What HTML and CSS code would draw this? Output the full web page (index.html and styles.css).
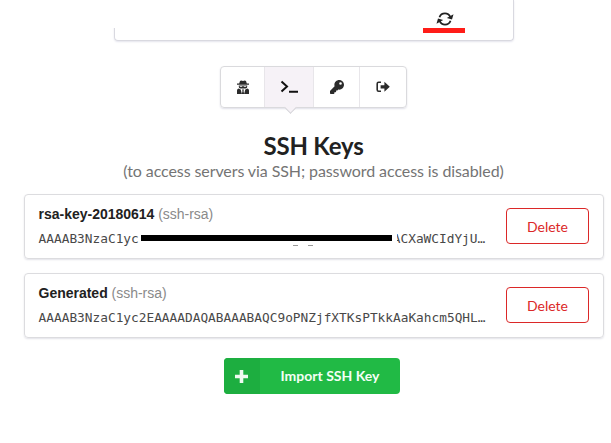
FILE: index.html
```html
<!DOCTYPE html>
<html lang="en">
<head>
<meta charset="utf-8">
<title>SSH Keys</title>
<link rel="stylesheet" href="styles.css">
</head>
<body>
<section class="panel">
  <div class="sync">
    <svg width="18" height="14" viewBox="0 0 18 14" fill="none" stroke="#222" stroke-width="1.800"><path d="M3.500 5.200C4.500 2.300 6.500 1.400 9 1.400c2.600 0 4.300 1.300 5.300 3.500"/><path d="M14.500 8.800C13.500 11.700 11.500 12.600 9 12.600c-2.600 0-4.300-1.300-5.300-3.500"/><path fill="#222" stroke="none" d="M17.500 2.200 16 7.500 10.800 6zM.5 11.800 2 6.500 7.200 8z"/></svg>
  </div>
</section>
<nav class="menu">
  <a class="item agent"><svg width="14" height="15" viewBox="0 0 14 15" fill="#2b2b2b"><path d="M4 1q1-1 3 0 2-1 3 0l.8 2.600H13v1.200H1V3.600h2.200zM2.800 5.400h8.400v1.400q0 1.800-1.600 1.800H4.400Q2.800 8.600 2.800 6.800zM2.500 8.500 4.700 9.500 5.900 14H1V10.500Q1 9 2.500 8.500zM11.500 8.500 9.300 9.500 8.100 14H13V10.500Q13 9 11.500 8.500zM6 9.500h2L7.500 11l.7 3H5.800l.7-3z"/><path fill="#fff" d="M3.800 6h2.500v.8H3.800zM7.700 6h2.500v.8H7.700z"/></svg></a>
  <a class="item terminal active"><svg width="20" height="14" viewBox="0 0 20 14" fill="none" stroke="#111" stroke-width="2"><path d="M2.500 1.500 8 6.500 2.500 11.500M10 11.800h9"/></svg></a>
  <a class="item key"><svg width="14" height="14" viewBox="0 0 512 512" fill="#2b2b2b"><path d="M512 176c0 97.200-78.800 176-176 176-11.200 0-22.200-1.100-32.800-3.100l-24 27A24 24 0 0 1 261.200 384H224v40c0 13.300-10.700 24-24 24h-40v40c0 13.300-10.700 24-24 24H24c-13.300 0-24-10.700-24-24v-78.100c0-6.400 2.500-12.500 7-17l161.800-161.800A176 176 0 0 1 160 176C160 78.800 238.800 0 336 0s176 78.500 176 176zM336 128a48 48 0 1 0 96 0 48 48 0 1 0-96 0z"/></svg></a>
  <a class="item exit"><svg width="14" height="14" viewBox="0 0 14 14"><path fill="none" stroke="#2b2b2b" stroke-width="1.600" d="M5 2.300H2.600Q1.200 2.300 1.200 3.700v6.100q0 1.400 1.400 1.400H5"/><path fill="#2b2b2b" d="M4.600 5.200H8.400V1.800L13.800 6.800 8.400 11.800V8.400H4.600z"/></svg></a>
</nav>
<header class="heading">
  <h2>SSH Keys</h2>
  <p>(to access servers via SSH; password access is disabled)</p>
</header>
<main class="keys">
  <article class="card">
    <div class="info">
      <div class="name"><b>rsa-key-20180614</b> (ssh-rsa)</div>
      <div class="value masked"><span>AAAAB3NzaC1yc</span><span class="mask"><i class="bar"></i><i class="specks"></i></span><span class="tail">ACXaWCIdYjU…</span></div>
    </div>
    <button class="delete">Delete</button>
  </article>
  <article class="card">
    <div class="info">
      <div class="name"><b>Generated</b> (ssh-rsa)</div>
      <div class="value">AAAAB3NzaC1yc2EAAAADAQABAAABAQC9oPNZjfXTKsPTkkAaKahcm5QHL…</div>
    </div>
    <button class="delete">Delete</button>
  </article>
</main>
<button class="import">
  <span class="plus"><svg width="13" height="13" viewBox="0 0 13 13" fill="#effaf1"><path d="M4.700 0h3.600v4.700H13v3.600H8.300V13H4.700V8.300H0V4.700h4.700z"/></svg></span>
  <span class="label">Import SSH Key</span>
</button>
</body>
</html>
```
FILE: styles.css
```css
* { box-sizing: border-box; }
body {
  margin: 0;
  height: 443px;
  overflow: hidden;
  background: #fff;
  color: #212121;
  font-family: Lato, sans-serif;
  font-size: 14px;
}
svg { display: block; }
.panel {
  position: relative;
  width: 400px;
  height: 41px;
  margin: 0 0 0 114px;
  border: 1px solid #d9d9e0;
  border-top: 0;
  border-radius: 0 0 4px 4px;
  box-shadow: 0 1px 2px #e4e4ed;
}
.panel::before {
  content: "";
  position: absolute;
  left: -4px;
  top: 0;
  width: 12px;
  height: 28px;
  background: #fff;
}
.sync {
  width: 42px;
  height: 33px;
  margin-left: 308px;
  padding: 12px 0 0 13px;
  border-bottom: 5px solid #ff1d18;
}
.menu {
  display: flex;
  width: 187px;
  height: 42px;
  margin: 25px 0 0 220px;
  border: 1px solid #dadadd;
  border-radius: 4px;
  box-shadow: 0 1px 2px #dfdfe8;
}
.item {
  display: flex;
  align-items: center;
  justify-content: center;
  border-right: 1px solid #e8e6ea;
}
.agent { width: 44px; }
.terminal { width: 49px; }
.key { width: 46px; }
.exit { width: 46px; border-right: 0; }
.active {
  position: relative;
  background: #f6f2f7;
}
.active::after {
  content: "";
  position: absolute;
  left: 21px;
  bottom: -5px;
  width: 8px;
  height: 8px;
  border: solid #d4d4d8;
  border-width: 0 1px 1px 0;
  background: #f6f2f7;
  transform: rotate(45deg);
}
.heading {
  padding-top: 22px;
  padding-left: 16px;
  text-align: center;
}
h2 {
  margin: 0;
  font-size: 24px;
  line-height: 31px;
  font-weight: 700;
  letter-spacing: -.2px;
}
.heading p {
  margin: 0;
  font-size: 16px;
  line-height: 20px;
  letter-spacing: -.09px;
  color: #747474;
  white-space: nowrap;
}
.keys {
  display: grid;
  gap: 14px;
  width: 580px;
  margin: 13px 0 0 24px;
}
.card {
  display: flex;
  align-items: flex-start;
  justify-content: space-between;
  height: 65px;
  padding: 9px 14px 0 13.6px;
  border: 1px solid #dcdcdf;
  border-radius: 4px;
  box-shadow: 0 1px 2px #e2e2e8;
}
.info {
  width: 455px;
  white-space: nowrap;
}
.name {
  font: 14px/20px "Liberation Sans", sans-serif;
  letter-spacing: -.02px;
  color: #8a8a8a;
}
.name b { color: #212121; }
.value {
  margin-top: 5px;
  font: 12.8px/20px "DejaVu Sans Mono", monospace;
  color: #484848;
}
.masked { display: flex; }
.mask {
  position: relative;
  z-index: 1;
  width: 258px;
  height: 20px;
  margin-right: -4px;
  padding: 6px 0 0 2px;
  background: #fff;
}
.bar {
  display: block;
  width: 251px;
  height: 6px;
  background: #000;
}
.specks {
  display: block;
  width: 20px;
  height: 1px;
  margin: 4px 0 0 152px;
  border: solid #999;
  border-width: 0 5px;
}
.delete {
  width: 83px;
  height: 36px;
  margin-top: 4px;
  padding: 0;
  border: 1px solid #db2828;
  border-radius: 4px;
  background: #fff;
  color: #db2828;
  font: 14px Lato, sans-serif;
}
.import {
  display: flex;
  width: 176px;
  height: 36px;
  margin: 20px 0 0 224px;
  padding: 0;
  overflow: hidden;
  border: 0;
  border-radius: 4px;
  background: #21ba45;
  color: #f4fff5;
  font: 700 14px/36px Lato, sans-serif;
}
.plus {
  display: flex;
  align-items: center;
  justify-content: center;
  width: 36px;
  height: 36px;
  padding-right: 2px;
  background: #1dae40;
}
.label { width: 140px; }
```
